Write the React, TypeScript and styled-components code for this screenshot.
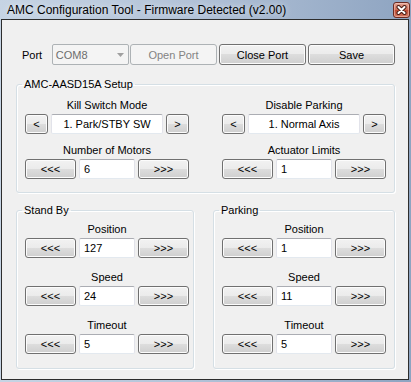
import React from "react";
import styled, { createGlobalStyle } from "styled-components";

const Global = createGlobalStyle`
  html, body { margin: 0; padding: 0; background: #fff; }
  body { font-family: "Liberation Sans", Arial, sans-serif; font-size: 11px; }
  * { box-sizing: border-box; }
`;

const Window = styled.div`
  width: 411px;
  height: 382px;
  display: flex;
  flex-direction: column;
  padding: 0 2px 2px 1px;
  background: linear-gradient(90deg, #c6d4e4 0%, #b3c3d8 45%, #8ea4c1 100%);
`;

const TitleBar = styled.div`
  height: 19px;
  flex: none;
  display: flex;
  align-items: center;
  padding-left: 6px;
  font-family: "Liberation Sans", Arial, sans-serif;
  font-size: 12px;
  color: #000;
  text-shadow: 0 0 6px rgba(255, 255, 255, 0.8);
`;

const TitleText = styled.span`
  flex: 1;
  white-space: nowrap;
`;

const CloseBtn = styled.div`
  width: 17px;
  height: 16px;
  margin-right: -1px;
  margin-top: 1px;
  border: 1px solid #6c2b22;
  border-radius: 3px;
  background: linear-gradient(#e4a697 0%, #cf6d57 48%, #bd4a33 52%, #d47a62 100%);
  box-shadow: inset 0 0 0 1px rgba(255, 220, 210, 0.45);
  display: flex;
  align-items: center;
  justify-content: center;
`;

const Client = styled.div`
  flex: 1;
  border: 1px solid #2d2d2d;
  background: #f0f0f0;
  padding: 24px 13px 0 14px;
  display: flex;
  flex-direction: column;
`;

const TopRow = styled.div`
  display: flex;
  align-items: center;
  gap: 2px;
  height: 21px;
`;

const PortLabel = styled.span`
  width: 34px;
  padding-left: 6px;
  font-size: 11px;
  color: #000;
`;

const Combo = styled.div`
  width: 78px;
  height: 21px;
  margin-right: -1px;
  border: 1px solid #adb2b5;
  border-radius: 2px;
  background: #f4f4f4;
  color: #6d6d6d;
  display: flex;
  align-items: center;
  padding-left: 3px;
  font-size: 11px;
`;

const ComboText = styled.span`
  flex: 1;
`;

const ComboArrow = styled.span`
  width: 16px;
  display: flex;
  justify-content: center;
`;

const Button = styled.div<{ $w: number; $h?: number; $disabled?: boolean }>`
  width: ${(p) => p.$w}px;
  height: ${(p) => p.$h ?? 20}px;
  flex: none;
  display: flex;
  align-items: center;
  justify-content: center;
  font-size: 11px;
  border-radius: 3px;
  border: 1px solid ${(p) => (p.$disabled ? "#adb2b5" : "#707070")};
  color: ${(p) => (p.$disabled ? "#838383" : "#000")};
  background: ${(p) =>
    p.$disabled
      ? "#f4f4f4"
      : "linear-gradient(#f2f2f2 0%, #ebebeb 50%, #dddddd 50%, #cfcfcf 100%)"};
  box-shadow: inset 0 0 0 1px ${(p) => (p.$disabled ? "#f4f4f4" : "#fcfcfc")};
  white-space: nowrap;
`;

const Group = styled.fieldset<{ $w?: number; $pad: string; $mt: number }>`
  margin: ${(p) => p.$mt}px 0 0 0;
  padding: ${(p) => p.$pad};
  min-width: 0;
  width: ${(p) => (p.$w ? `${p.$w}px` : "auto")};
  flex: none;
  border: 1px solid #d5dfe5;
  border-radius: 3px;
  box-shadow: inset 1px 1px 0 #fff, 1px 1px 0 #fff;
`;

const Legend = styled.legend`
  margin-left: -3px;
  padding: 0 2px;
  font-size: 11px;
  line-height: 13px;
  color: #000;
`;

const SetupGrid = styled.div`
  display: grid;
  grid-template-columns: 164px 164px;
  justify-content: space-between;
  row-gap: 9px;
`;

const Stack = styled.div`
  display: flex;
  flex-direction: column;
  gap: 12px;
`;

const Field = styled.div`
  width: 164px;
  display: flex;
  flex-direction: column;
  align-items: center;
`;

const FieldLabel = styled.div`
  height: 14px;
  line-height: 14px;
  margin-bottom: 2px;
  font-size: 11px;
  color: #000;
  white-space: nowrap;
`;

const ControlRow = styled.div`
  width: 100%;
  display: flex;
  gap: 3px;
`;

const Box = styled.div<{ $w: number; $center?: boolean }>`
  width: ${(p) => p.$w}px;
  height: 20px;
  flex: none;
  background: #fff;
  border: 1px solid #dbdfe6;
  border-top-color: #abadb3;
  border-left-color: #e2e3ea;
  border-right-color: #e2e3ea;
  border-bottom-color: #e3e9ef;
  border-radius: 2px;
  display: flex;
  align-items: center;
  justify-content: ${(p) => (p.$center ? "center" : "flex-start")};
  padding-left: ${(p) => (p.$center ? 0 : 4)}px;
  font-size: 11px;
  color: #000;
`;

const LowerRow = styled.div`
  display: flex;
  gap: 19px;
`;

function Selector({ label, value }: { label: string; value: string }) {
  return (
    <Field>
      <FieldLabel>{label}</FieldLabel>
      <ControlRow>
        <Button $w={23}>&lt;</Button>
        <Box $w={112} $center>
          {value}
        </Box>
        <Button $w={23}>&gt;</Button>
      </ControlRow>
    </Field>
  );
}

function Stepper({ label, value }: { label: string; value: string }) {
  return (
    <Field>
      <FieldLabel>{label}</FieldLabel>
      <ControlRow>
        <Button $w={51}>&lt;&lt;&lt;</Button>
        <Box $w={56}>{value}</Box>
        <Button $w={51}>&gt;&gt;&gt;</Button>
      </ControlRow>
    </Field>
  );
}

export default function App() {
  return (
    <>
      <Global />
      <Window>
        <TitleBar>
          <TitleText>AMC Configuration Tool - Firmware Detected (v2.00)</TitleText>
          <CloseBtn>
            <svg width="11" height="10" viewBox="0 0 11 10">
              <path d="M2.5 2 L8.5 8 M8.5 2 L2.5 8" stroke="#4a1c14" strokeWidth="4" strokeLinecap="round" />
              <path d="M2.5 2 L8.5 8 M8.5 2 L2.5 8" stroke="#fff" strokeWidth="2" strokeLinecap="round" />
            </svg>
          </CloseBtn>
        </TitleBar>
        <Client>
          <TopRow>
            <PortLabel>Port</PortLabel>
            <Combo>
              <ComboText>COM8</ComboText>
              <ComboArrow>
                <svg width="7" height="4" viewBox="0 0 7 4">
                  <path d="M0 0 H7 L3.5 4 Z" fill="#a0a0a0" />
                </svg>
              </ComboArrow>
            </Combo>
            <Button $w={87} $h={21} $disabled>
              Open Port
            </Button>
            <Button $w={87} $h={21}>
              Close Port
            </Button>
            <Button $w={87} $h={21}>
              Save
            </Button>
          </TopRow>

          <Group $mt={13} $pad="7px 8px 13px 8px">
            <Legend>AMC-AASD15A Setup</Legend>
            <SetupGrid>
              <Selector label="Kill Switch Mode" value="1. Park/STBY SW" />
              <Selector label="Disable Parking" value="1. Normal Axis" />
              <Stepper label="Number of Motors" value="6" />
              <Stepper label="Actuator Limits" value="1" />
            </SetupGrid>
          </Group>

          <LowerRow>
            <Group $mt={11} $w={178} $pad="5px 4px 14px 8px">
              <Legend>Stand By</Legend>
              <Stack>
                <Stepper label="Position" value="127" />
                <Stepper label="Speed" value="24" />
                <Stepper label="Timeout" value="5" />
              </Stack>
            </Group>
            <Group $mt={11} $w={182} $pad="5px 8px 14px 8px">
              <Legend>Parking</Legend>
              <Stack>
                <Stepper label="Position" value="1" />
                <Stepper label="Speed" value="11" />
                <Stepper label="Timeout" value="5" />
              </Stack>
            </Group>
          </LowerRow>
        </Client>
      </Window>
    </>
  );
}
